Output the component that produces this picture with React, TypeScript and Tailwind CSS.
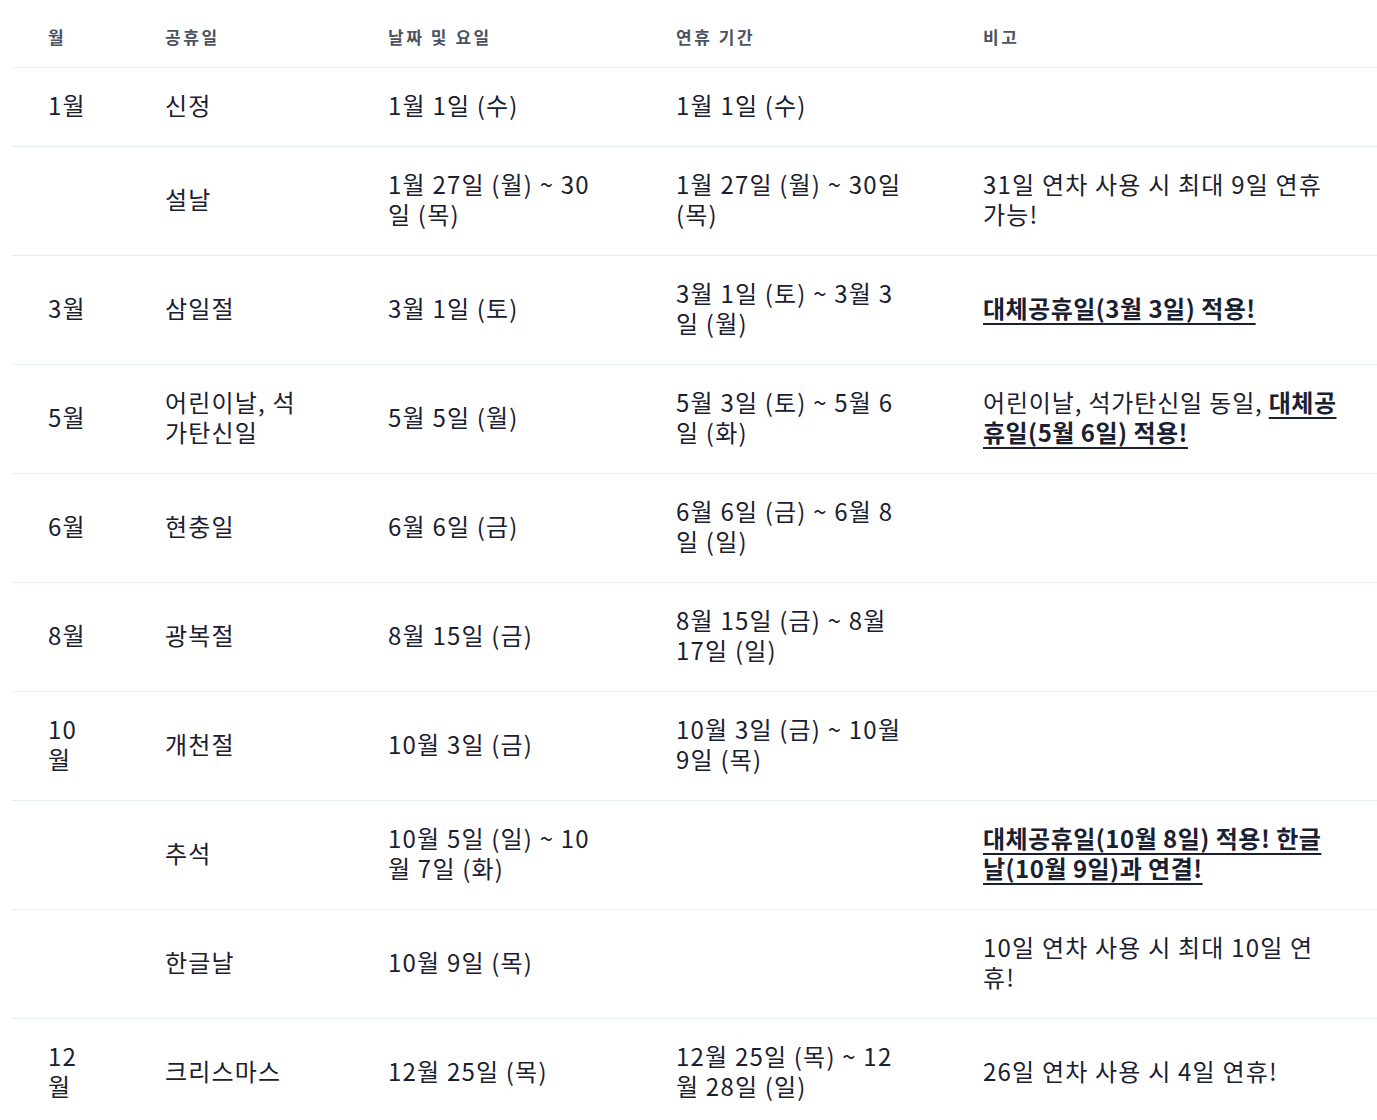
import React from "react";

type Row = {
  month: string;
  name: string;
  date: string;
  span: string;
  note: React.ReactNode;
};

const Sub = ({ children }: { children: React.ReactNode }) => (
  <a href="#" className="font-bold tracking-[0.02em] underline decoration-2 underline-offset-[5px]">
    {children}
  </a>
);

const rows: Row[] = [
  { month: "1월", name: "신정", date: "1월 1일 (수)", span: "1월 1일 (수)", note: "" },
  { month: "", name: "설날", date: "1월 27일 (월) ~ 30일 (목)", span: "1월 27일 (월) ~ 30일 (목)", note: "31일 연차 사용 시 최대 9일 연휴 가능!" },
  { month: "3월", name: "삼일절", date: "3월 1일 (토)", span: "3월 1일 (토) ~ 3월 3일 (월)", note: <Sub>대체공휴일(3월 3일) 적용!</Sub> },
  {
    month: "5월",
    name: "어린이날, 석가탄신일",
    date: "5월 5일 (월)",
    span: "5월 3일 (토) ~ 5월 6일 (화)",
    note: (
      <>
        <span className="tracking-[0.035em]">어린이날, 석가탄신일 동일, </span>
        <Sub>대체공휴일(5월 6일) 적용!</Sub>
      </>
    ),
  },
  { month: "6월", name: "현충일", date: "6월 6일 (금)", span: "6월 6일 (금) ~ 6월 8일 (일)", note: "" },
  { month: "8월", name: "광복절", date: "8월 15일 (금)", span: "8월 15일 (금) ~ 8월 17일 (일)", note: "" },
  { month: "10월", name: "개천절", date: "10월 3일 (금)", span: "10월 3일 (금) ~ 10월 9일 (목)", note: "" },
  { month: "", name: "추석", date: "10월 5일 (일) ~ 10월 7일 (화)", span: "", note: <Sub>대체공휴일(10월 8일) 적용! 한글날(10월 9일)과 연결!</Sub> },
  { month: "", name: "한글날", date: "10월 9일 (목)", span: "", note: "10일 연차 사용 시 최대 10일 연휴!" },
  { month: "12월", name: "크리스마스", date: "12월 25일 (목)", span: "12월 25일 (목) ~ 12월 28일 (일)", note: "26일 연차 사용 시 4일 연휴!" },
];

const headers = ["월", "공휴일", "날짜 및 요일", "연휴 기간", "비고"];

export default function App() {
  return (
    <div className="min-h-screen bg-white pl-3 font-['Noto_Sans_CJK_KR','Noto_Sans',sans-serif] text-[#1b2030]">
      <table className="w-full table-fixed border-collapse text-left">
        <colgroup>
          <col className="w-[117px]" />
          <col className="w-[223px]" />
          <col className="w-[288px]" />
          <col className="w-[307px]" />
          <col />
        </colgroup>
        <thead>
          <tr className="border-b border-[#e8eef5]">
            {headers.map((h) => (
              <th
                key={h}
                className="px-9 pt-[27px] pb-[20px] text-[17px] leading-[20px] font-bold tracking-[0.15em] text-[#4a5363]"
              >
                {h}
              </th>
            ))}
          </tr>
        </thead>
        <tbody className="text-[24px] leading-[30px] tracking-[0.05em]">
          {rows.map((r, i) => (
            <tr key={i} className="border-b border-[#e8eef5] align-middle">
              <td className="px-9 pt-[22px] pb-[26px]">{r.month}</td>
              <td className="px-9 pt-[22px] pb-[26px]">{r.name}</td>
              <td className="px-9 pt-[22px] pb-[26px]">{r.date}</td>
              <td className="px-9 pt-[22px] pb-[26px]">{r.span}</td>
              <td className="pl-9 pr-[35px] pt-[22px] pb-[26px]">{r.note}</td>
            </tr>
          ))}
        </tbody>
      </table>
    </div>
  );
}
